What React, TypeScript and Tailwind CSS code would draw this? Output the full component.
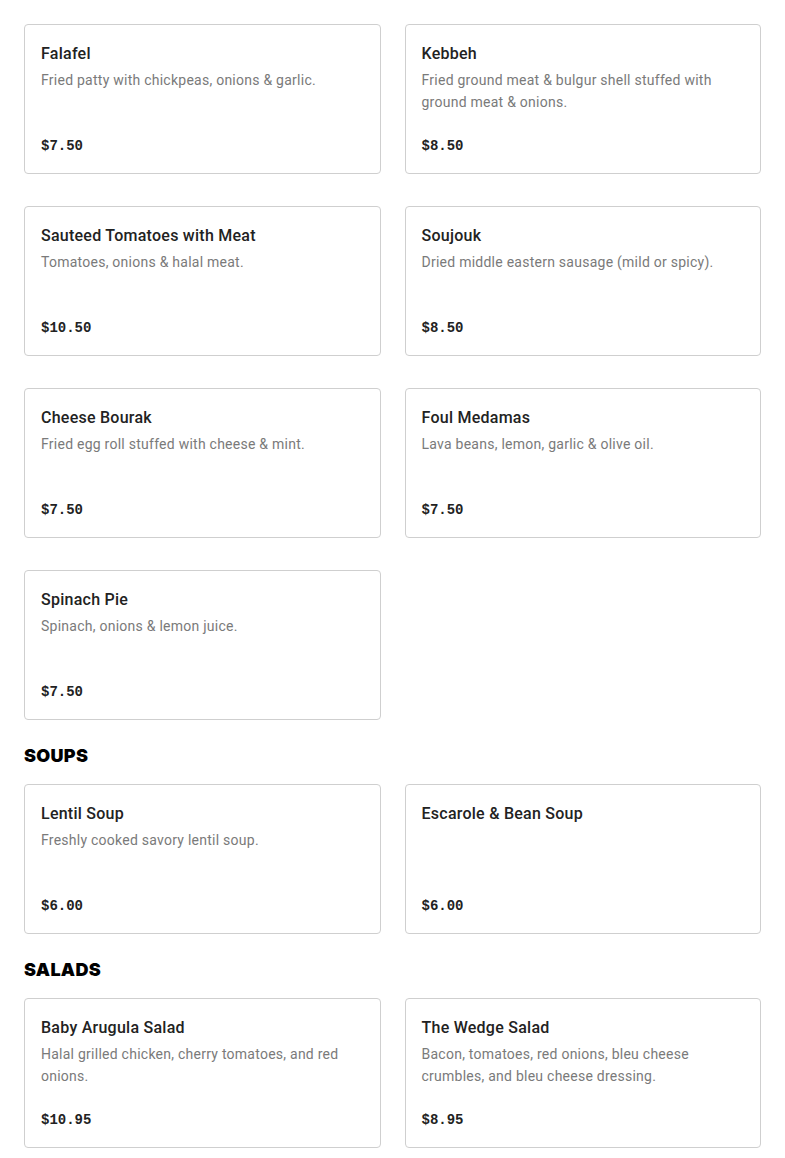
type Item = { name: string; description?: string; price: string };

const appetizers: Item[] = [
  { name: 'Falafel', description: 'Fried patty with chickpeas, onions & garlic.', price: '$7.50' },
  {
    name: 'Kebbeh',
    description: 'Fried ground meat & bulgur shell stuffed with ground meat & onions.',
    price: '$8.50',
  },
  { name: 'Sauteed Tomatoes with Meat', description: 'Tomatoes, onions & halal meat.', price: '$10.50' },
  { name: 'Soujouk', description: 'Dried middle eastern sausage (mild or spicy).', price: '$8.50' },
  { name: 'Cheese Bourak', description: 'Fried egg roll stuffed with cheese & mint.', price: '$7.50' },
  { name: 'Foul Medamas', description: 'Lava beans, lemon, garlic & olive oil.', price: '$7.50' },
  { name: 'Spinach Pie', description: 'Spinach, onions & lemon juice.', price: '$7.50' },
];

const soups: Item[] = [
  { name: 'Lentil Soup', description: 'Freshly cooked savory lentil soup.', price: '$6.00' },
  { name: 'Escarole & Bean Soup', price: '$6.00' },
];

const salads: Item[] = [
  {
    name: 'Baby Arugula Salad',
    description: 'Halal grilled chicken, cherry tomatoes, and red onions.',
    price: '$10.95',
  },
  {
    name: 'The Wedge Salad',
    description: 'Bacon, tomatoes, red onions, bleu cheese crumbles, and bleu cheese dressing.',
    price: '$8.95',
  },
];

function MenuCard({ item }: { item: Item }) {
  return (
    <div className="h-[150px] flex flex-col justify-between rounded border border-[#cfcfcf] bg-white px-4 pt-[17px] pb-[15px]">
      <div>
        <h3 className="text-base leading-6 font-medium tracking-[0.25px] text-[#222] font-['Roboto',sans-serif]">
          {item.name}
        </h3>
        {item.description && (
          <p className="mt-[3px] text-sm leading-[22px] tracking-[0.25px] text-[#7a7a7a] font-['Roboto',sans-serif]">
            {item.description}
          </p>
        )}
      </div>
      <span className="text-sm leading-6 font-bold text-[#222] font-['Liberation_Mono',monospace]">
        {item.price}
      </span>
    </div>
  );
}

function MenuGrid({ items }: { items: Item[] }) {
  return (
    <div className="grid grid-cols-2 gap-x-6 gap-y-8">
      {items.map((item) => (
        <MenuCard key={item.name} item={item} />
      ))}
    </div>
  );
}

function SectionTitle({ children }: { children: string }) {
  return (
    <h2 className="mt-[22px] mb-[14px] text-lg leading-7 font-black uppercase tracking-[0.3px] text-black font-['Inter',sans-serif]">
      {children}
    </h2>
  );
}

export default function App() {
  return (
    <div className="min-h-screen bg-white px-6 pt-6 pb-8">
      <MenuGrid items={appetizers} />
      <SectionTitle>Soups</SectionTitle>
      <MenuGrid items={soups} />
      <SectionTitle>Salads</SectionTitle>
      <MenuGrid items={salads} />
    </div>
  );
}
